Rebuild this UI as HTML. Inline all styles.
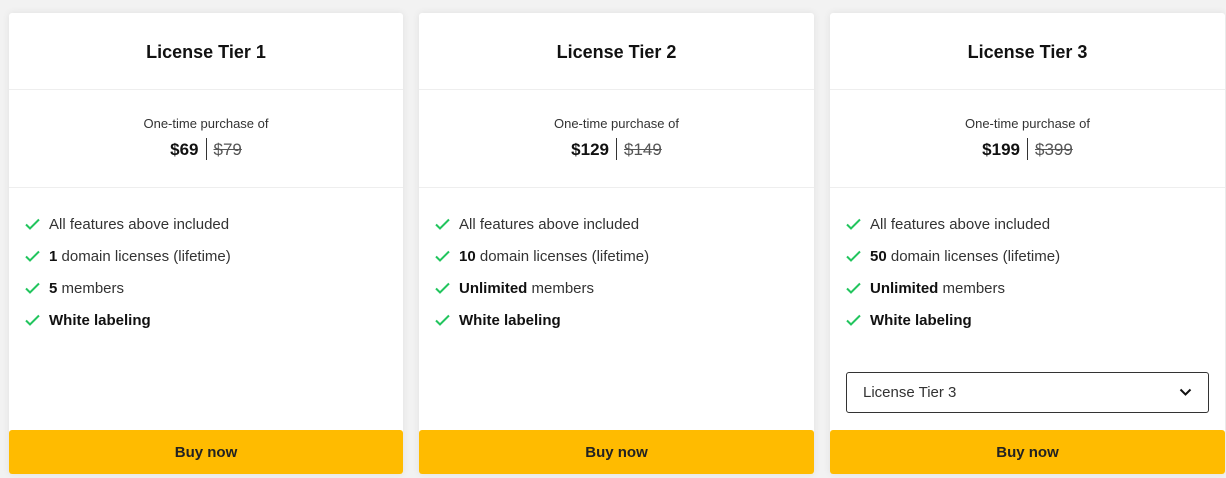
<!DOCTYPE html>
<html><head><meta charset="utf-8"><style>
*{box-sizing:border-box;margin:0;padding:0}
body{width:1226px;height:478px;background:#f2f2f2;font-family:"Liberation Sans",sans-serif;color:#222;position:relative;overflow:hidden}
.card{position:absolute;top:13px;height:461px;background:#fff;box-shadow:0 0 8px rgba(0,0,0,.08);border-radius:3px}
.t{position:absolute;top:29px;width:100%;text-align:center;font-size:18px;font-weight:700;color:#111}
.d1{position:absolute;top:76px;left:0;right:0;border-top:1px solid #eee}
.d2{position:absolute;top:174px;left:0;right:0;border-top:1px solid #eee}
.ot{position:absolute;top:103px;width:100%;text-align:center;font-size:13px;color:#333}
.pr{position:absolute;top:125px;width:100%;text-align:center;font-size:17px}
.pr b{font-weight:700;color:#111}
.pr .sep{display:inline-block;width:1px;height:22px;background:#333;vertical-align:-5px;margin:0 7px}
.pr s{color:#555}
ul{position:absolute;top:203px;left:16px;list-style:none;font-size:15px;color:#333}
li{height:32px;display:flex;align-items:flex-start}
li svg{margin:2px 9px 0 0}
li b{color:#111}
.btn{position:absolute;left:0;right:0;bottom:0;height:44px;background:#ffbb00;border-radius:3px;text-align:center;line-height:46px;font-size:15px;font-weight:700;color:#222}
.sel{position:absolute;left:16px;right:16px;top:359px;height:41px;border:1px solid #333;border-radius:3px;font-size:15px;color:#333;line-height:40px;padding-left:16px}
.sel svg{position:absolute;right:16px;top:15px}
</style></head><body>
<div class="card" style="left:9px;width:394px">
<div class="t">License Tier 1</div><div class="d1"></div>
<div class="ot">One-time purchase of</div>
<div class="pr"><b>$69</b><span class="sep"></span><s>$79</s></div><div class="d2"></div>
<ul>
<li><svg width="15" height="12" viewBox="0 0 15 12"><path d="M1 6.5l4 4L14 1.5" fill="none" stroke="#22c55e" stroke-width="2"/></svg>All features above included</li>
<li><svg width="15" height="12" viewBox="0 0 15 12"><path d="M1 6.5l4 4L14 1.5" fill="none" stroke="#22c55e" stroke-width="2"/></svg><span><b>1</b> domain licenses (lifetime)</span></li>
<li><svg width="15" height="12" viewBox="0 0 15 12"><path d="M1 6.5l4 4L14 1.5" fill="none" stroke="#22c55e" stroke-width="2"/></svg><span><b>5</b> members</span></li>
<li><svg width="15" height="12" viewBox="0 0 15 12"><path d="M1 6.5l4 4L14 1.5" fill="none" stroke="#22c55e" stroke-width="2"/></svg><b>White labeling</b></li>
</ul>
<div class="btn">Buy now</div>
</div>
<div class="card" style="left:419px;width:395px">
<div class="t">License Tier 2</div><div class="d1"></div>
<div class="ot">One-time purchase of</div>
<div class="pr"><b>$129</b><span class="sep"></span><s>$149</s></div><div class="d2"></div>
<ul>
<li><svg width="15" height="12" viewBox="0 0 15 12"><path d="M1 6.5l4 4L14 1.5" fill="none" stroke="#22c55e" stroke-width="2"/></svg>All features above included</li>
<li><svg width="15" height="12" viewBox="0 0 15 12"><path d="M1 6.5l4 4L14 1.5" fill="none" stroke="#22c55e" stroke-width="2"/></svg><span><b>10</b> domain licenses (lifetime)</span></li>
<li><svg width="15" height="12" viewBox="0 0 15 12"><path d="M1 6.5l4 4L14 1.5" fill="none" stroke="#22c55e" stroke-width="2"/></svg><span><b>Unlimited</b> members</span></li>
<li><svg width="15" height="12" viewBox="0 0 15 12"><path d="M1 6.5l4 4L14 1.5" fill="none" stroke="#22c55e" stroke-width="2"/></svg><b>White labeling</b></li>
</ul>
<div class="btn">Buy now</div>
</div>
<div class="card" style="left:830px;width:395px">
<div class="t">License Tier 3</div><div class="d1"></div>
<div class="ot">One-time purchase of</div>
<div class="pr"><b>$199</b><span class="sep"></span><s>$399</s></div><div class="d2"></div>
<ul>
<li><svg width="15" height="12" viewBox="0 0 15 12"><path d="M1 6.5l4 4L14 1.5" fill="none" stroke="#22c55e" stroke-width="2"/></svg>All features above included</li>
<li><svg width="15" height="12" viewBox="0 0 15 12"><path d="M1 6.5l4 4L14 1.5" fill="none" stroke="#22c55e" stroke-width="2"/></svg><span><b>50</b> domain licenses (lifetime)</span></li>
<li><svg width="15" height="12" viewBox="0 0 15 12"><path d="M1 6.5l4 4L14 1.5" fill="none" stroke="#22c55e" stroke-width="2"/></svg><span><b>Unlimited</b> members</span></li>
<li><svg width="15" height="12" viewBox="0 0 15 12"><path d="M1 6.5l4 4L14 1.5" fill="none" stroke="#22c55e" stroke-width="2"/></svg><b>White labeling</b></li>
</ul>
<div class="sel">License Tier 3<svg width="13" height="9" viewBox="0 0 13 9"><path d="M1.5 1.5l5 5 5-5" fill="none" stroke="#111" stroke-width="2"/></svg></div>
<div class="btn">Buy now</div>
</div>
</body></html>
